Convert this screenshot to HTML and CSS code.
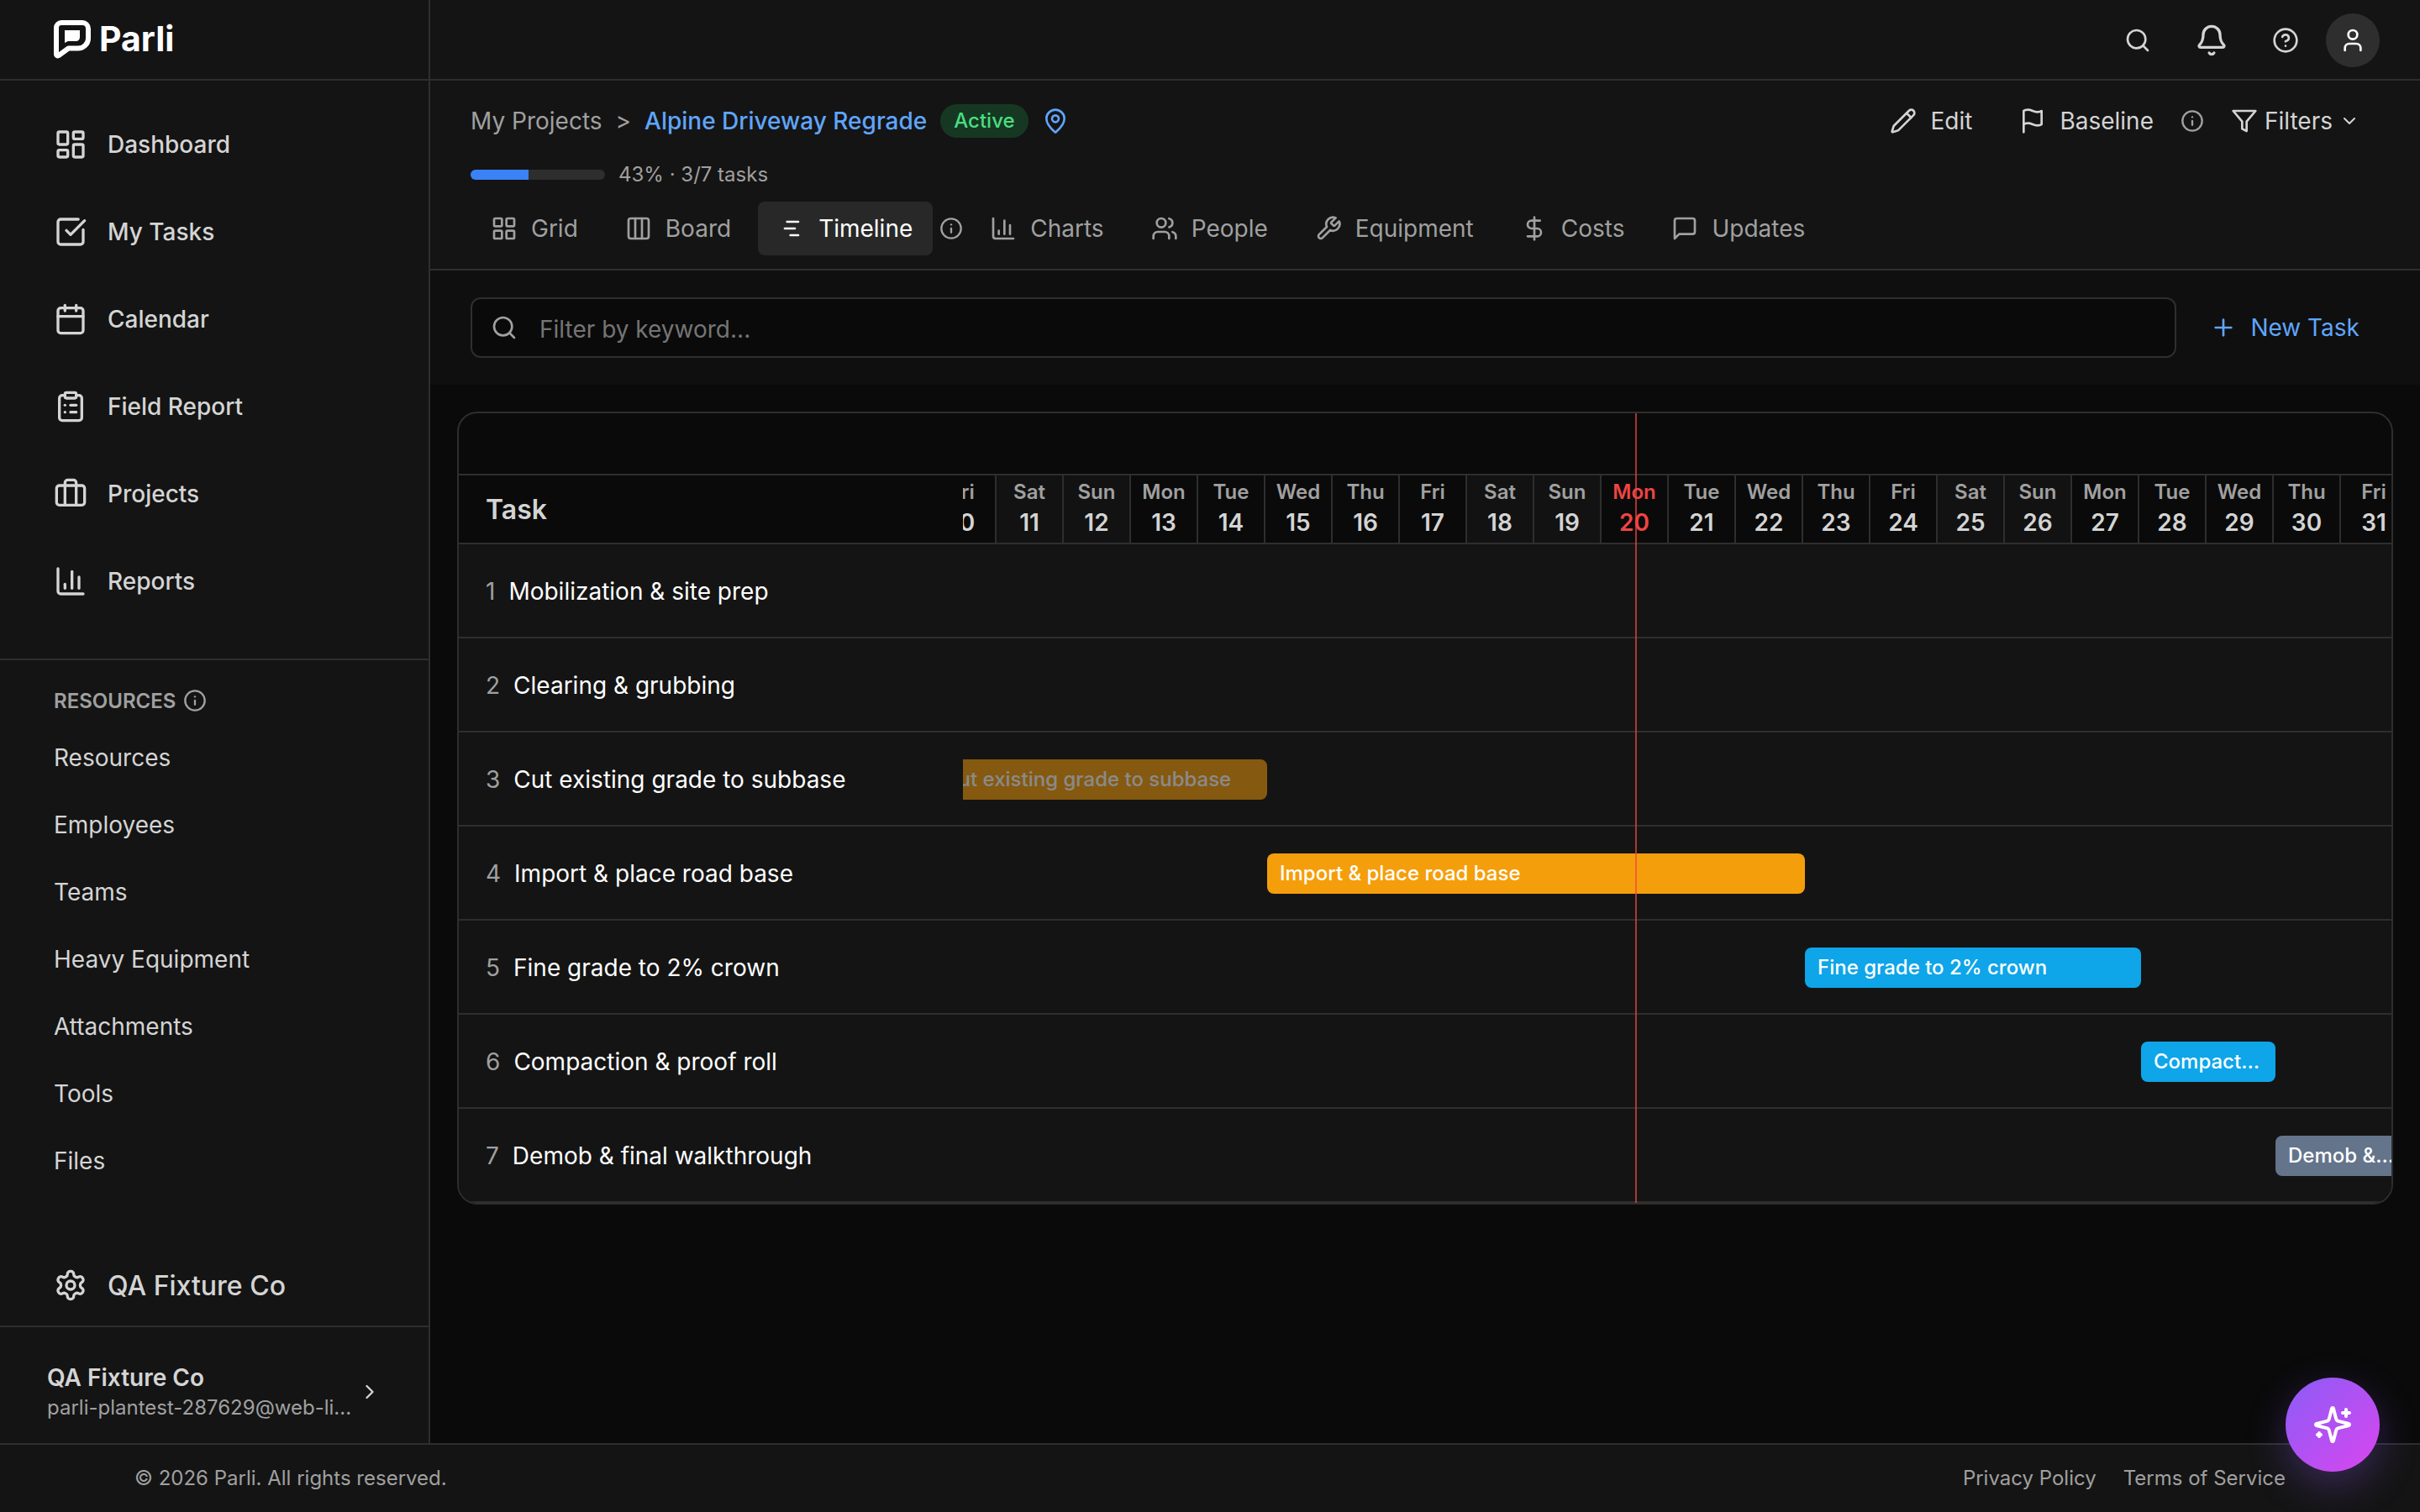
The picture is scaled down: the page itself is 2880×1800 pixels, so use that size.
FILE: index.html
```html
<!DOCTYPE html>
<html lang="en">
<head>
  <meta charset="UTF-8">
  <meta name="viewport" content="width=device-width, initial-scale=1.0">
  <title>Parli - Alpine Driveway Regrade</title>
  <link rel="stylesheet" href="styles.css">
</head>
<body>
  <div class="app">
    <!-- Sidebar -->
    <aside class="sidebar">
      <div class="logo">
        <svg width="44" height="46" viewBox="0 0 44 46">
          <path d="M9 3h25a7 7 0 0 1 7 7v12a12 12 0 0 1-12 11.500H17.500L5.500 42.200A1.700 1.700 0 0 1 3 40.700V9a6 6 0 0 1 6-6z" fill="none" stroke="#fff" stroke-width="6" stroke-linejoin="round"/>
          <path d="M13 12h18v8.500a4.500 4.500 0 0 1-4.500 4.500H17l-4 2z" fill="#fff"/>
        </svg>
        <span class="logo-text">Parli</span>
      </div>

      <nav class="main-nav">
        <a class="nav-item">
          <svg class="icon icon-lg" viewBox="0 0 24 24"><rect x="3" y="3" width="7" height="9" rx="1"/><rect x="14" y="3" width="7" height="5" rx="1"/><rect x="14" y="12" width="7" height="9" rx="1"/><rect x="3" y="16" width="7" height="5" rx="1"/></svg>
          Dashboard
        </a>
        <a class="nav-item">
          <svg class="icon icon-lg" viewBox="0 0 24 24"><path d="M21 10.500V19a2 2 0 0 1-2 2H5a2 2 0 0 1-2-2V5a2 2 0 0 1 2-2h12.500"/><path d="m9 11 3 3L22 4"/></svg>
          My Tasks
        </a>
        <a class="nav-item">
          <svg class="icon icon-lg" viewBox="0 0 24 24"><path d="M8 2v4"/><path d="M16 2v4"/><rect x="3" y="4" width="18" height="18" rx="2"/><path d="M3 10h18"/></svg>
          Calendar
        </a>
        <a class="nav-item">
          <svg class="icon icon-lg" viewBox="0 0 24 24"><rect x="8" y="2" width="8" height="4" rx="1"/><path d="M16 4h2a2 2 0 0 1 2 2v14a2 2 0 0 1-2 2H6a2 2 0 0 1-2-2V6a2 2 0 0 1 2-2h2"/><path d="M12 11h4"/><path d="M12 16h4"/><path d="M8 11h.01"/><path d="M8 16h.01"/></svg>
          Field Report
        </a>
        <a class="nav-item">
          <svg class="icon icon-lg" viewBox="0 0 24 24"><path d="M16 20V4a2 2 0 0 0-2-2h-4a2 2 0 0 0-2 2v16"/><rect x="2" y="6" width="20" height="14" rx="2"/></svg>
          Projects
        </a>
        <a class="nav-item">
          <svg class="icon icon-lg" viewBox="0 0 24 24"><path d="M3 3v16a2 2 0 0 0 2 2h16"/><path d="M18 17V9"/><path d="M13 17V5"/><path d="M8 17v-3"/></svg>
          Reports
        </a>
      </nav>

      <div class="resources">
        <div class="resources-title">
          RESOURCES
          <svg class="icon icon-sm" viewBox="0 0 24 24"><circle cx="12" cy="12" r="10"/><path d="M12 16v-4"/><path d="M12 8h.01"/></svg>
        </div>
        <a class="resource-item">Resources</a>
        <a class="resource-item">Employees</a>
        <a class="resource-item">Teams</a>
        <a class="resource-item">Heavy Equipment</a>
        <a class="resource-item">Attachments</a>
        <a class="resource-item">Tools</a>
        <a class="resource-item">Files</a>
      </div>

      <div class="company">
        <svg class="icon icon-lg" viewBox="0 0 24 24"><path d="M12.220 2h-.44a2 2 0 0 0-2 2v.18a2 2 0 0 1-1 1.730l-.43.25a2 2 0 0 1-2 0l-.15-.08a2 2 0 0 0-2.730.73l-.22.38a2 2 0 0 0 .73 2.730l.15.1a2 2 0 0 1 1 1.720v.51a2 2 0 0 1-1 1.740l-.15.09a2 2 0 0 0-.73 2.730l.22.38a2 2 0 0 0 2.730.73l.15-.08a2 2 0 0 1 2 0l.43.25a2 2 0 0 1 1 1.730V20a2 2 0 0 0 2 2h.44a2 2 0 0 0 2-2v-.18a2 2 0 0 1 1-1.730l.43-.25a2 2 0 0 1 2 0l.15.08a2 2 0 0 0 2.730-.73l.22-.39a2 2 0 0 0-.73-2.730l-.15-.08a2 2 0 0 1-1-1.740v-.5a2 2 0 0 1 1-1.740l.15-.09a2 2 0 0 0 .73-2.730l-.22-.38a2 2 0 0 0-2.730-.73l-.15.08a2 2 0 0 1-2 0l-.43-.25a2 2 0 0 1-1-1.730V4a2 2 0 0 0-2-2z"/><circle cx="12" cy="12" r="3"/></svg>
        QA Fixture Co
      </div>

      <div class="account">
        <div class="account-info">
          <div class="account-name">QA Fixture Co</div>
          <div class="account-email">parli-plantest-287629@web-li...</div>
        </div>
        <svg class="icon icon-sm" viewBox="0 0 24 24"><path d="m9 18 6-6-6-6"/></svg>
      </div>
    </aside>

    <div class="main">
      <!-- Top bar -->
      <header class="topbar">
        <svg class="icon icon-md" viewBox="0 0 24 24"><circle cx="11" cy="11" r="8"/><path d="m21 21-4.300-4.300"/></svg>
        <svg class="icon icon-lg" viewBox="0 0 24 24"><path d="M10.268 21a2 2 0 0 0 3.464 0"/><path d="M3.262 15.326A1 1 0 0 0 4 17h16a1 1 0 0 0 .74-1.673C19.410 13.956 18 12.499 18 8A6 6 0 0 0 6 8c0 4.499-1.411 5.956-2.738 7.326"/></svg>
        <svg class="icon icon-md" viewBox="0 0 24 24"><circle cx="12" cy="12" r="10"/><path d="M9.090 9a3 3 0 0 1 5.830 1c0 2-3 3-3 3"/><path d="M12 17h.01"/></svg>
        <div class="avatar">
          <svg class="icon icon-md" viewBox="0 0 24 24"><path d="M19 21v-2a4 4 0 0 0-4-4H9a4 4 0 0 0-4 4v2"/><circle cx="12" cy="7" r="4"/></svg>
        </div>
      </header>

      <!-- Project header -->
      <section class="project-header">
        <div class="title-row">
          <div class="breadcrumb">
            <span>My Projects</span>
            <span>&gt;</span>
            <a class="project-name">Alpine Driveway Regrade</a>
            <span class="status-badge">Active</span>
            <svg class="icon icon-md pin" viewBox="0 0 24 24"><path d="M20 10c0 4.993-5.539 10.193-7.399 11.799a1 1 0 0 1-1.202 0C9.539 20.193 4 14.993 4 10a8 8 0 0 1 16 0"/><circle cx="12" cy="10" r="3"/></svg>
          </div>
          <div class="actions">
            <div class="action">
              <svg class="icon icon-md" viewBox="0 0 24 24"><path d="M21.174 6.812a1 1 0 0 0-3.986-3.987L3.842 16.174a2 2 0 0 0-.5.83l-1.321 4.352a.5.5 0 0 0 .623.622l4.353-1.320a2 2 0 0 0 .83-.497z"/><path d="m15 5 4 4"/></svg>
              Edit
            </div>
            <div class="action">
              <svg class="icon icon-md" viewBox="0 0 24 24"><path d="M4 15s1-1 4-1 5 2 8 2 4-1 4-1V3s-1 1-4 1-5-2-8-2-4 1-4 1z"/><path d="M4 22v-7"/></svg>
              Baseline
            </div>
            <svg class="icon icon-info" viewBox="0 0 24 24"><circle cx="12" cy="12" r="10"/><path d="M12 16v-4"/><path d="M12 8h.01"/></svg>
            <div class="action filters">
              <svg class="icon icon-md" viewBox="0 0 24 24"><path d="M22 3H2l8 9.460V19l4 2v-8.540z"/></svg>
              Filters
              <svg class="icon icon-xs" viewBox="0 0 24 24"><path d="m6 9 6 6 6-6"/></svg>
            </div>
          </div>
        </div>

        <div class="progress-row">
          <div class="progress"><div class="progress-fill" style="width: 43%"></div></div>
          <span>43% · 3/7 tasks</span>
        </div>

        <div class="tabs">
          <div class="tab">
            <svg class="icon icon-md" viewBox="0 0 24 24"><rect x="3" y="3" width="7" height="7" rx="1"/><rect x="14" y="3" width="7" height="7" rx="1"/><rect x="14" y="14" width="7" height="7" rx="1"/><rect x="3" y="14" width="7" height="7" rx="1"/></svg>
            Grid
          </div>
          <div class="tab">
            <svg class="icon icon-md" viewBox="0 0 24 24"><rect x="3" y="3" width="18" height="18" rx="2"/><path d="M9 3v18"/><path d="M15 3v18"/></svg>
            Board
          </div>
          <div class="tab active">
            <svg class="icon icon-md" viewBox="0 0 24 24"><path d="M8 6h10"/><path d="M6 12h9"/><path d="M11 18h7"/></svg>
            Timeline
          </div>
          <svg class="icon icon-info" viewBox="0 0 24 24"><circle cx="12" cy="12" r="10"/><path d="M12 16v-4"/><path d="M12 8h.01"/></svg>
          <div class="tab">
            <svg class="icon icon-md" viewBox="0 0 24 24"><path d="M3 3v16a2 2 0 0 0 2 2h16"/><path d="M18 17V9"/><path d="M13 17V5"/><path d="M8 17v-3"/></svg>
            Charts
          </div>
          <div class="tab">
            <svg class="icon icon-md" viewBox="0 0 24 24"><path d="M16 21v-2a4 4 0 0 0-4-4H6a4 4 0 0 0-4 4v2"/><circle cx="9" cy="7" r="4"/><path d="M22 21v-2a4 4 0 0 0-3-3.870"/><path d="M16 3.130a4 4 0 0 1 0 7.750"/></svg>
            People
          </div>
          <div class="tab">
            <svg class="icon icon-md" viewBox="0 0 24 24"><path d="M14.700 6.300a1 1 0 0 0 0 1.400l1.600 1.600a1 1 0 0 0 1.400 0l3.770-3.770a6 6 0 0 1-7.940 7.940l-6.910 6.910a2.120 2.120 0 0 1-3-3l6.910-6.910a6 6 0 0 1 7.940-7.940l-3.760 3.760z"/></svg>
            Equipment
          </div>
          <div class="tab">
            <svg class="icon icon-md" viewBox="0 0 24 24"><path d="M12 2v20"/><path d="M17 5H9.500a3.500 3.500 0 0 0 0 7h5a3.500 3.500 0 0 1 0 7H6"/></svg>
            Costs
          </div>
          <div class="tab">
            <svg class="icon icon-md" viewBox="0 0 24 24"><path d="M21 15a2 2 0 0 1-2 2H7l-4 4V5a2 2 0 0 1 2-2h14a2 2 0 0 1 2 2z"/></svg>
            Updates
          </div>
        </div>
      </section>

      <!-- Search + new task -->
      <section class="toolbar">
        <div class="search-bar">
          <svg class="icon icon-md" viewBox="0 0 24 24"><circle cx="11" cy="11" r="8"/><path d="m21 21-4.300-4.300"/></svg>
          <span>Filter by keyword...</span>
        </div>
        <div class="new-task">
          <svg class="icon icon-md" viewBox="0 0 24 24"><path d="M5 12h14"/><path d="M12 5v14"/></svg>
          New Task
        </div>
      </section>

      <!-- Timeline -->
      <section class="timeline">
        <div class="timeline-top"></div>
        <div class="timeline-head">
          <div class="task-title">Task</div>
          <div class="track">
            <div class="day"><span>Fri</span><b>10</b></div>
            <div class="day weekend"><span>Sat</span><b>11</b></div>
            <div class="day weekend"><span>Sun</span><b>12</b></div>
            <div class="day"><span>Mon</span><b>13</b></div>
            <div class="day"><span>Tue</span><b>14</b></div>
            <div class="day"><span>Wed</span><b>15</b></div>
            <div class="day"><span>Thu</span><b>16</b></div>
            <div class="day"><span>Fri</span><b>17</b></div>
            <div class="day weekend"><span>Sat</span><b>18</b></div>
            <div class="day weekend"><span>Sun</span><b>19</b></div>
            <div class="day today"><span>Mon</span><b>20</b></div>
            <div class="day"><span>Tue</span><b>21</b></div>
            <div class="day"><span>Wed</span><b>22</b></div>
            <div class="day"><span>Thu</span><b>23</b></div>
            <div class="day"><span>Fri</span><b>24</b></div>
            <div class="day weekend"><span>Sat</span><b>25</b></div>
            <div class="day weekend"><span>Sun</span><b>26</b></div>
            <div class="day"><span>Mon</span><b>27</b></div>
            <div class="day"><span>Tue</span><b>28</b></div>
            <div class="day"><span>Wed</span><b>29</b></div>
            <div class="day"><span>Thu</span><b>30</b></div>
            <div class="day"><span>Fri</span><b>31</b></div>
          </div>
        </div>
        <div class="task-row">
          <div class="task-name"><span>1</span>Mobilization &amp; site prep</div>
          <div class="track"></div>
        </div>
        <div class="task-row">
          <div class="task-name"><span>2</span>Clearing &amp; grubbing</div>
          <div class="track"></div>
        </div>
        <div class="task-row">
          <div class="task-name"><span>3</span>Cut existing grade to subbase</div>
          <div class="track"><div class="bar orange done" style="grid-column: 1 / span 5">Cut existing grade to subbase</div></div>
        </div>
        <div class="task-row">
          <div class="task-name"><span>4</span>Import &amp; place road base</div>
          <div class="track"><div class="bar orange" style="grid-column: 6 / span 8">Import &amp; place road base</div></div>
        </div>
        <div class="task-row">
          <div class="task-name"><span>5</span>Fine grade to 2% crown</div>
          <div class="track"><div class="bar blue" style="grid-column: 14 / span 5">Fine grade to 2% crown</div></div>
        </div>
        <div class="task-row">
          <div class="task-name"><span>6</span>Compaction &amp; proof roll</div>
          <div class="track"><div class="bar blue" style="grid-column: 19 / span 2">Compaction &amp; proof roll</div></div>
        </div>
        <div class="task-row">
          <div class="task-name"><span>7</span>Demob &amp; final walkthrough</div>
          <div class="track"><div class="bar gray" style="grid-column: 21 / span 2">Demob &amp; final walkthrough</div></div>
        </div>
        <div class="today-line"></div>
      </section>
    </div>
  </div>

  <footer class="footer">
    <span>© 2026 Parli. All rights reserved.</span>
    <div class="footer-links">
      <a>Privacy Policy</a>
      <a>Terms of Service</a>
    </div>
  </footer>

  <!-- Assistant button -->
  <button class="assistant">
    <svg class="icon" width="48" height="48" viewBox="0 0 24 24"><path d="M9.937 15.500A2 2 0 0 0 8.500 14.063l-6.135-1.582a.5.5 0 0 1 0-.962L8.500 9.936A2 2 0 0 0 9.937 8.500l1.582-6.135a.5.5 0 0 1 .963 0L14.063 8.500A2 2 0 0 0 15.500 9.937l6.135 1.581a.5.5 0 0 1 0 .964L15.500 14.063a2 2 0 0 0-1.437 1.437l-1.582 6.135a.5.5 0 0 1-.963 0z"/><path d="M20 3v4"/><path d="M22 5h-4"/><path d="M4 17v2"/><path d="M5 18H3"/></svg>
  </button>
</body>
</html>
```
FILE: styles.css
```css
* {
  box-sizing: border-box;
}

body {
  margin: 0;
  width: 2880px;
  height: 1800px;
  overflow: hidden;
  display: flex;
  flex-direction: column;
  background: #0a0a0a;
  color: #d4d4d4;
  font-family: Inter, sans-serif;
  font-size: 28px;
}

.icon {
  fill: none;
  stroke: currentColor;
  stroke-width: 2;
  stroke-linecap: round;
  stroke-linejoin: round;
  flex-shrink: 0;
  display: block;
}

.icon-lg {
  width: 40px;
  height: 40px;
}

.icon-md {
  width: 32px;
  height: 32px;
}

.icon-info,
.icon-sm {
  width: 28px;
  height: 28px;
}

.icon-xs {
  width: 24px;
  height: 24px;
}

.app {
  display: flex;
  height: 1718px;
}

/* Sidebar */
.sidebar {
  width: 512px;
  flex-shrink: 0;
  background: #141414;
  border-right: 2px solid #2e2e2e;
  display: flex;
  flex-direction: column;
}

.logo {
  height: 96px;
  padding: 0 64px;
  border-bottom: 2px solid #2e2e2e;
  display: flex;
  align-items: center;
  gap: 10px;
}

.logo-text {
  padding-bottom: 3px;
  font-size: 41px;
  font-weight: 700;
  line-height: 46px;
  color: #fff;
}

.main-nav {
  height: 690px;
  padding: 24px 0;
  border-bottom: 2px solid #2e2e2e;
}

.nav-item {
  height: 104px;
  padding-left: 64px;
  display: flex;
  align-items: center;
  gap: 24px;
  font-weight: 500;
}

.resources {
  padding: 24px 64px;
}

.resources-title {
  height: 52px;
  padding-bottom: 4px;
  display: flex;
  align-items: center;
  gap: 9px;
  font-size: 24px;
  font-weight: 600;
  color: #a0a0a0;
}

.resource-item {
  height: 80px;
  display: flex;
  align-items: center;
}

.company {
  height: 98px;
  margin-top: auto;
  padding-left: 64px;
  display: flex;
  align-items: center;
  gap: 24px;
  font-size: 32px;
  font-weight: 500;
  border-bottom: 2px solid #2e2e2e;
}

.account {
  height: 138px;
  padding: 16px 56px 0;
  display: flex;
  align-items: center;
  gap: 8px;
}

.account-info {
  width: 364px;
}

.account-name {
  font-weight: 600;
  line-height: 38px;
}

.account-email {
  font-size: 24px;
  line-height: 34px;
  color: #a0a0a0;
  white-space: nowrap;
}

/* Top bar */
.main {
  flex-grow: 1;
  min-width: 0;
}

.topbar {
  height: 96px;
  padding: 2px 48px 0 0;
  background: #141414;
  border-bottom: 2px solid #2e2e2e;
  display: flex;
  justify-content: flex-end;
  align-items: center;
  gap: 52px;
}

.avatar {
  width: 64px;
  height: 64px;
  margin-left: -20px;
  border-radius: 50%;
  background: #2e2e2e;
  color: #fff;
  display: flex;
  justify-content: center;
  align-items: center;
}

/* Project header */
.project-header {
  height: 226px;
  padding: 20px 48px 0;
  background: #141414;
  border-bottom: 2px solid #2e2e2e;
  color: #a0a0a0;
}

.title-row {
  height: 56px;
  display: flex;
  justify-content: space-between;
  align-items: center;
}

.breadcrumb {
  display: flex;
  align-items: center;
  gap: 16px;
}

.project-name {
  color: #60a5fa;
  font-weight: 500;
}

.status-badge {
  height: 40px;
  line-height: 40px;
  padding: 0 16px;
  border-radius: 20px;
  background: #163823;
  color: #4ade80;
  font-size: 24px;
  font-weight: 500;
}

.pin {
  color: #60a5fa;
}

.actions {
  display: flex;
  align-items: center;
  gap: 8px;
}

.action {
  padding: 0 24px;
  display: flex;
  align-items: center;
  gap: 16px;
  color: #d4d4d4;
}

.filters {
  gap: 8px;
}

.progress-row {
  height: 32px;
  margin-top: 20px;
  display: flex;
  align-items: center;
  gap: 16px;
  font-size: 24px;
}

.progress-row span {
  padding-bottom: 2px;
}

.progress {
  width: 160px;
  height: 12px;
  border-radius: 6px;
  background: #2e2e2e;
  overflow: hidden;
}

.progress-fill {
  height: 100%;
  background: #3b82f6;
}

.tabs {
  margin-top: 16px;
  display: flex;
  align-items: center;
  gap: 8px;
}

.tab {
  height: 64px;
  padding: 0 24px;
  border-radius: 8px;
  display: flex;
  align-items: center;
  gap: 16px;
}

.tab.active {
  background: #282828;
  color: #fff;
}

/* Toolbar */
.toolbar {
  height: 136px;
  padding: 32px 48px;
  background: #0f0f0f;
  display: flex;
  gap: 16px;
}

.search-bar {
  flex-grow: 1;
  padding: 0 22px;
  border: 2px solid #2e2e2e;
  border-radius: 12px;
  background: #0a0a0a;
  color: #a0a0a0;
  display: flex;
  align-items: center;
  gap: 26px;
}

.search-bar span {
  padding-top: 3px;
  color: #757575;
}

.new-task {
  padding: 0 24px;
  display: flex;
  align-items: center;
  gap: 16px;
  color: #60a5fa;
}

/* Timeline */
.timeline {
  position: relative;
  height: 944px;
  margin: 32px 32px 0;
  border: 2px solid #2e2e2e;
  border-radius: 24px;
  overflow: hidden;
}

.timeline-top {
  height: 74px;
  border-bottom: 2px solid #2e2e2e;
}

.timeline-head {
  height: 82px;
  border-bottom: 2px solid #2e2e2e;
  display: flex;
}

.task-title,
.task-name {
  width: 600px;
  flex-shrink: 0;
  padding-left: 32px;
  display: flex;
  align-items: center;
  position: relative;
  z-index: 1;
}

.task-title {
  background: #0a0a0a;
  font-size: 32px;
  font-weight: 600;
}

.task-name {
  padding-top: 2px;
  background: #141414;
  color: #fff;
  gap: 16px;
}

.task-name span {
  color: #a0a0a0;
}

/* one column per day, scrolled by half a day */
.track {
  display: grid;
  grid-template-columns: repeat(22, 80px);
  margin-left: -40px;
}

.day {
  height: 80px;
  padding-top: 4px;
  border-right: 2px solid #2e2e2e;
  text-align: center;
}

.day span,
.day b {
  display: block;
}

.day span {
  font-size: 24px;
  font-weight: 600;
  line-height: 32px;
  color: #a0a0a0;
}

.day b {
  font-weight: 600;
  line-height: 40px;
}

.weekend {
  background: #121212;
}

.today span,
.today b {
  color: #ef4444;
}

.task-row {
  height: 112px;
  background: #141414;
  border-bottom: 2px solid #2e2e2e;
  display: flex;
}

.bar {
  height: 48px;
  margin: 32px -2px 0 2px;
  padding: 0 15px;
  border-radius: 8px;
  color: #fff;
  font-size: 24px;
  font-weight: 500;
  line-height: 48px;
  white-space: nowrap;
  overflow: hidden;
  text-overflow: ellipsis;
}

.orange {
  background: #f59e0b;
}

.blue {
  background: #0ea5e9;
}

.gray {
  background: #64748b;
}

.done {
  opacity: 0.5;
}

.today-line {
  position: absolute;
  top: 0;
  bottom: 0;
  left: 1400px;
  width: 2px;
  background: #ef4444;
  opacity: 0.7;
  z-index: 2;
}

/* Footer */
.footer {
  height: 82px;
  padding: 0 160px 2px;
  background: #141414;
  border-top: 2px solid #2e2e2e;
  color: #a0a0a0;
  font-size: 24px;
  display: flex;
  justify-content: space-between;
  align-items: center;
}

.footer-links {
  display: flex;
  gap: 32px;
}

.assistant {
  position: fixed;
  right: 48px;
  bottom: 48px;
  width: 112px;
  height: 112px;
  padding: 0;
  border: none;
  border-radius: 50%;
  background: linear-gradient(135deg, #8b5cf6, #d946ef);
  box-shadow: 0 16px 48px rgba(139, 92, 246, 0.3);
  color: #fff;
  display: flex;
  justify-content: center;
  align-items: center;
}
```
